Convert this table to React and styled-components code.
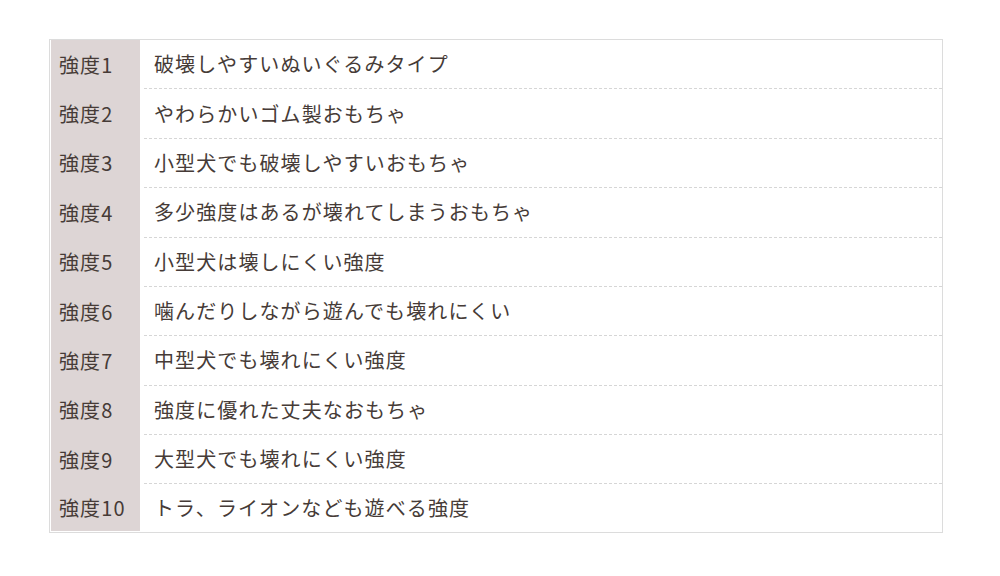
import React from "react"
import styled, { createGlobalStyle } from "styled-components"

const GlobalStyle = createGlobalStyle`
  body {
    margin: 0;
    background: #fff;
    font-family: "Noto Sans CJK JP", "Noto Sans", sans-serif;
  }
`

const rows = [
  ["強度1", "破壊しやすいぬいぐるみタイプ"],
  ["強度2", "やわらかいゴム製おもちゃ"],
  ["強度3", "小型犬でも破壊しやすいおもちゃ"],
  ["強度4", "多少強度はあるが壊れてしまうおもちゃ"],
  ["強度5", "小型犬は壊しにくい強度"],
  ["強度6", "噛んだりしながら遊んでも壊れにくい"],
  ["強度7", "中型犬でも壊れにくい強度"],
  ["強度8", "強度に優れた丈夫なおもちゃ"],
  ["強度9", "大型犬でも壊れにくい強度"],
  ["強度10", "トラ、ライオンなども遊べる強度"],
]

const Page = () => {
  return (
    <>
      <GlobalStyle />
      <Wrap>
        <Table>
          {rows.map(([head, text], i) => {
            const last = i === rows.length - 1
            return (
              <Row key={i} $last={last}>
                <Head>{head}</Head>
                <Cell $last={last}>{text}</Cell>
              </Row>
            )
          })}
        </Table>
      </Wrap>
    </>
  )
}

const Wrap = styled.div`
  padding: 39px 0 0 49px;
`
const Table = styled.div`
  width: 891px;
  border: 1px solid #dcdcdc;
  padding: 0 0 1px 1px;
  color: #463b37;
  font-size: 20px;
  letter-spacing: 1.1px;
`
const Row = styled.div`
  display: flex;
  height: ${p => (p.$last ? "47px" : "49.375px")};
`
const Head = styled.div`
  width: 89px;
  flex-shrink: 0;
  background: #ddd5d5;
  display: flex;
  align-items: center;
  padding: 0 0 1px 8px;
  box-sizing: border-box;
`
const Cell = styled.div`
  flex: 1;
  margin-left: 4px;
  padding: 0 0 1px 10px;
  display: flex;
  align-items: center;
  border-bottom: ${p => (p.$last ? "none" : "1px dashed #d6d6d6")};
`

export default Page
